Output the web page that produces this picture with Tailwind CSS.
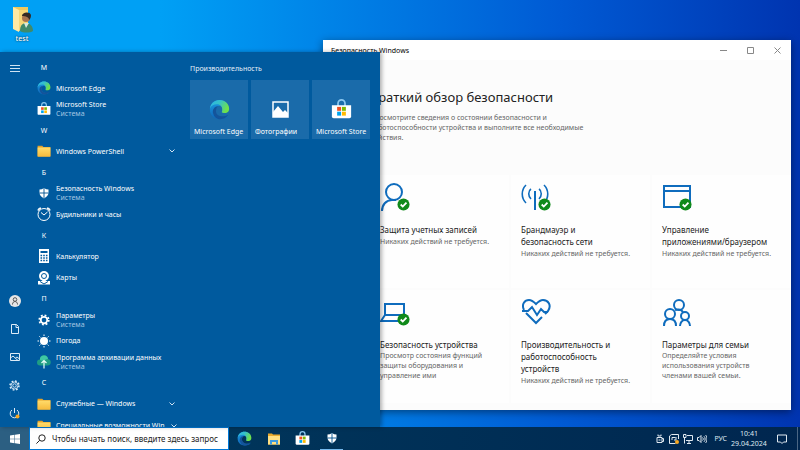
<!DOCTYPE html>
<html lang="ru">
<head>
  <meta charset="UTF-8" />
  <meta name="viewport" content="width=device-width, initial-scale=1.0" />
  <title>Безопасность Windows</title>
  <script src="https://cdn.jsdelivr.net/npm/@tailwindcss/browser@4"></script>
</head>
<body class="h-screen flex flex-col overflow-hidden font-['Noto_Sans','Open_Sans',sans-serif] text-[7px] leading-[9px] bg-linear-to-r from-[#00a0f5] from-20% via-[#005ad4] via-70% to-[#0034b0]">

  <!-- shared icons -->
  <svg class="absolute size-0">
    <defs>
      <linearGradient id="edge-blue" x1="0" y1="0" x2="0" y2="1">
        <stop offset="0" stop-color="#1b9de2" />
        <stop offset="1" stop-color="#0f66b8" />
      </linearGradient>
      <linearGradient id="edge-green" x1="0" y1="0" x2="1" y2="0.4">
        <stop offset="0" stop-color="#2bb5e8" />
        <stop offset="0.5" stop-color="#35c1c9" />
        <stop offset="1" stop-color="#6fe04b" />
      </linearGradient>
      <linearGradient id="folder-front" x1="0" y1="0" x2="0" y2="1">
        <stop offset="0" stop-color="#ffdc6b" />
        <stop offset="1" stop-color="#f6b93b" />
      </linearGradient>
    </defs>
    <symbol id="edge" viewBox="0 0 24 24">
      <path fill="url(#edge-blue)" d="M1 12C1 5 6 1 12 1c6 0 10 4 10 9 0 3-2 5-5 5-2 0-3-1-2-2 1-3-1-5-3-5-3 0-5 3-4 7 1 4 5 6 9 6 2 0 3-1 5-2-2 3-6 4-10 4C5 23 1 18 1 12z" />
      <path fill="#14549a" d="M8 14c0-3 1-5 3-6-5 0-8 5-6 9 1 4 5 6 8 6 4 0 7-2 9-5-7 4-14 1-14-4z" />
      <path fill="url(#edge-green)" d="M1 11C2 5 6 1 12 1c6 0 11 4 11 10 0 4-3 5-6 5-2 0-3-1-2-2 1-5-2-8-6-8-4 0-7 2-8 5z" />
    </symbol>
    <symbol id="store" viewBox="0 0 24 24">
      <path d="M8 8V5a4 4 0 0 1 8 0v3" fill="none" stroke="#8cc8f0" stroke-width="2" />
      <path d="M1 7h22v13a2 2 0 0 1-2 2H3a2 2 0 0 1-2-2z" fill="#fff" />
      <path d="M7 9h4.500v4.500H7z" fill="#f25022" />
      <path d="M12.500 9H17v4.500h-4.500z" fill="#7fba00" />
      <path d="M7 14.500h4.500V19H7z" fill="#00a4ef" />
      <path d="M12.500 14.500H17V19h-4.500z" fill="#ffb900" />
    </symbol>
    <symbol id="folder" viewBox="0 0 24 24">
      <path d="M1 3h8l2 2h12v16H1z" fill="#e3a02b" />
      <path d="M1 6h22v15a1 1 0 0 1-1 1H2a1 1 0 0 1-1-1z" fill="url(#folder-front)" />
    </symbol>
    <symbol id="shield" viewBox="0 0 24 24">
      <path d="M12 2c3 2 6 3 9 3v6c0 6-4 9-9 12-5-3-9-6-9-12V5c3 0 6-1 9-3z" fill="#fff" />
      <path d="M12 2v21M3 12h18" stroke="#00508f" stroke-width="1.800" />
    </symbol>
    <symbol id="check" viewBox="0 0 14 14">
      <circle cx="7" cy="7" r="6.500" fill="#108a1a" />
      <path d="M4 7l2.200 2.200L10.200 5" fill="none" stroke="#fff" stroke-width="2" />
    </symbol>
    <symbol id="chevron" viewBox="0 0 8 8">
      <path d="M1.500 2.500L4 5l2.500-2.500" fill="none" stroke="#cfe3f3" />
    </symbol>
    <symbol id="gear" viewBox="0 0 24 24">
      <circle cx="12" cy="12" r="6.500" fill="none" stroke="currentColor" stroke-width="3.500" />
      <circle cx="12" cy="12" r="9.500" fill="none" stroke="currentColor" stroke-width="3.500" stroke-dasharray="3.730 3.730" />
    </symbol>
  </svg>

  <main class="relative flex-1 min-h-0">
    <!-- desktop icon -->
    <a href="#" class="absolute left-1 top-[6px] w-9 flex flex-col items-center gap-[1px] text-white font-medium text-shadow-[0_0_2px_#000]">
      <svg class="w-[24px] h-[27px]" viewBox="0 0 24 27">
        <path d="M3 1h15v21H3z" fill="#eec85e" />
        <path d="M3 1l6 3v22l-6-3z" fill="#ffe9a3" />
        <path d="M9 4h9v18l-9 3z" fill="#f7d777" />
        <path d="M10 25c0-6 3-8 6-8 4 0 7 3 7 8-3 2-10 2-13 0z" fill="#3f8a6c" />
        <path d="M14 17l2 5 3-5z" fill="#d9e8de" />
        <circle cx="16" cy="12" r="4" fill="#a97550" />
        <path d="M12 10c0-4 8-5 9-1 0 3-1 4-2 5 0-3-3-4-7-4z" fill="#352a24" />
      </svg>
      <span>test</span>
    </a>

    <!-- Windows Security window -->
    <section class="absolute left-[323px] right-[9px] top-10 bottom-[17px] flex flex-col bg-[#fcfcfc] shadow-[0_2px_8px_rgba(0,0,0,0.45)] overflow-hidden">
      <header class="h-5 shrink-0 flex items-center justify-between bg-white pl-2 text-black">
        <span>Безопасность Windows</span>
        <div class="flex text-[#888]">
          <button class="w-[27px] h-5 flex items-center justify-center" aria-label="Свернуть">
            <svg class="size-[7px]" viewBox="0 0 7 7" fill="none" stroke="currentColor"><path d="M0 3.500h7" /></svg>
          </button>
          <button class="w-[27px] h-5 flex items-center justify-center" aria-label="Развернуть">
            <svg class="size-[7px]" viewBox="0 0 7 7" fill="none" stroke="currentColor"><path d="M.5.5h6v6h-6z" /></svg>
          </button>
          <button class="w-[27px] h-5 flex items-center justify-center" aria-label="Закрыть">
            <svg class="size-[7px]" viewBox="0 0 7 7" fill="none" stroke="currentColor"><path d="M.5.5l6 6M6.500.5l-6 6" /></svg>
          </button>
        </div>
      </header>

      <div class="pl-[47px] pt-7">
        <h1 class="text-[13px] leading-[18px] text-[#222]">Краткий обзор безопасности</h1>
        <p class="mt-[7px] w-[225px] text-[7px] leading-[10px] text-[#666]">Просмотрите сведения о состоянии безопасности и<br />работоспособности устройства и выполните все необходимые<br />действия.</p>

        <div class="mt-8 grid grid-cols-3 gap-[2px]">
          <article class="h-[113px] bg-[#fefefe] px-[10px] pt-2">
            <svg class="w-[30px] h-7" viewBox="0 0 30 28">
              <g fill="none" stroke="#0f6cbd" stroke-width="2">
                <circle cx="14" cy="9" r="8" />
                <path d="M2 28c0-6 4-11 10-11h4" />
              </g>
              <use href="#check" x="17" y="15" width="13" height="13" />
            </svg>
            <h2 class="mt-[13px] text-[8px] leading-[12px] text-[#222]">Защита учетных записей</h2>
            <p class="leading-[11px] text-[#666] whitespace-nowrap">Никаких действий не требуется.</p>
          </article>

          <article class="h-[113px] bg-[#fefefe] px-[10px] pt-2">
            <svg class="w-[30px] h-7" viewBox="0 0 30 28">
              <g fill="none" stroke="#0f6cbd" stroke-width="2">
                <path d="M14 8v19" />
                <path d="M10 6c-3 2-3 7 0 10M18 6c3 2 3 7 0 10" stroke-width="1.600" />
                <path d="M5 2c-5 5-5 13 0 18M23 2c5 5 5 13 0 18" stroke-width="1.600" />
              </g>
              <use href="#check" x="17" y="15" width="13" height="13" />
            </svg>
            <h2 class="mt-[13px] text-[8px] leading-[12px] text-[#222]">Брандмауэр и<br />безопасность сети</h2>
            <p class="leading-[11px] text-[#666] whitespace-nowrap">Никаких действий не требуется.</p>
          </article>

          <article class="h-[113px] bg-[#fefefe] px-[10px] pt-2">
            <svg class="w-[30px] h-7" viewBox="0 0 30 28">
              <path d="M2 3h26v21H2zM2 8h26" fill="none" stroke="#0f6cbd" stroke-width="2" />
              <use href="#check" x="17" y="15" width="13" height="13" />
            </svg>
            <h2 class="mt-[13px] text-[8px] leading-[12px] text-[#222] whitespace-nowrap">Управление<br />приложениями/браузером</h2>
            <p class="leading-[11px] text-[#666] whitespace-nowrap">Никаких действий не требуется.</p>
          </article>

          <article class="h-[113px] bg-[#fefefe] px-[10px] pt-2">
            <svg class="w-[30px] h-7" viewBox="0 0 30 28">
              <path d="M5 17V6h19v10M5 17h17M5 17l-4 6h17" fill="none" stroke="#0f6cbd" stroke-width="2" />
              <use href="#check" x="17" y="15" width="13" height="13" />
            </svg>
            <h2 class="mt-[13px] text-[8px] leading-[12px] text-[#222] whitespace-nowrap">Безопасность устройства</h2>
            <p class="leading-[10px] text-[#666]">Просмотр состояния функций<br />защиты оборудования и<br />управление ими</p>
          </article>

          <article class="h-[113px] bg-[#fefefe] px-[10px] pt-2">
            <svg class="w-[30px] h-7" viewBox="0 0 30 28" fill="none" stroke="#0f6cbd" stroke-width="2">
              <path d="M3 12C0 6 4 2 8 2c3 0 5 2 7 4 2-2 4-4 7-4 5 0 9 5 5 11l-3 3M5 15l10 10 6-6" />
              <path d="M1 13h6l4-4 5 8 4-6 3 3h4" />
            </svg>
            <h2 class="mt-[13px] text-[8px] leading-[12px] text-[#222]">Производительность и<br />работоспособность<br />устройств</h2>
            <p class="leading-[11px] text-[#666] whitespace-nowrap">Никаких действий не требуется.</p>
          </article>

          <article class="h-[113px] bg-[#fefefe] px-[10px] pt-2">
            <svg class="w-[30px] h-7" viewBox="0 0 30 28" fill="none" stroke="#0f6cbd" stroke-width="2">
              <circle cx="17" cy="7" r="5" />
              <circle cx="8" cy="16" r="5" />
              <circle cx="23" cy="18" r="4" />
              <path d="M2 28c0-4 2-7 6-7s6 3 6 7M18 28c0-3 2-6 5-6s5 3 5 6M13 12c3-1 6-1 8 2" />
            </svg>
            <h2 class="mt-[13px] text-[8px] leading-[12px] text-[#222]">Параметры для семьи</h2>
            <p class="leading-[10px] text-[#666]">Определяйте условия<br />использования устройств<br />членами вашей семьи.</p>
          </article>
        </div>
      </div>
    </section>

    <!-- start menu -->
    <nav class="absolute left-0 top-[52px] bottom-0 w-[380px] flex bg-[#005a9e] text-white shadow-[2px_0_4px_rgba(0,0,0,0.3)] overflow-hidden">
      <div class="w-[29px] shrink-0 flex flex-col items-center pt-[2px]">
        <button class="h-7 flex items-center" aria-label="Меню">
          <svg class="size-[10px]" viewBox="0 0 10 10" stroke="#cfe3f3"><path d="M0 2.500h10M0 5.500h10M0 8.500h10" /></svg>
        </button>
        <button class="mt-auto h-7 flex items-center" aria-label="Учетная запись">
          <svg class="size-3" viewBox="0 0 12 12">
            <circle cx="6" cy="6" r="6" fill="#e6e6e6" />
            <path d="M3.500 9.500c0-4 5-4 5 0" fill="none" stroke="#555" />
            <circle cx="6" cy="4.500" r="1.800" fill="#e6e6e6" stroke="#555" />
          </svg>
        </button>
        <button class="h-7 flex items-center" aria-label="Документы">
          <svg class="size-[10px]" viewBox="0 0 10 10" fill="none" stroke="#dcebf7"><path d="M1.500.5h5l2 2v7h-7zM6 .5v3h2.500" /></svg>
        </button>
        <button class="h-7 flex items-center" aria-label="Изображения">
          <svg class="size-[10px]" viewBox="0 0 10 10" fill="none" stroke="#dcebf7"><path d="M.5 1.500h9v7h-9zM.5 6l2.500-2 5 4.500M5.500 6L7 5l2.500 2" /></svg>
        </button>
        <button class="h-7 flex items-center" aria-label="Параметры">
          <svg class="size-[11px]" viewBox="0 0 22 22" fill="none" stroke="#dcebf7">
            <circle cx="11" cy="11" r="3.500" stroke-width="1.800" />
            <circle cx="11" cy="11" r="7" stroke-width="1.800" />
            <circle cx="11" cy="11" r="9" stroke-width="3" stroke-dasharray="3.530 3.530" />
          </svg>
        </button>
        <button class="h-7 flex items-center" aria-label="Выключение">
          <svg class="size-[11px]" viewBox="0 0 11 11" fill="none" stroke="#dcebf7">
            <path d="M3 2a4.300 4.300 0 1 0 5 0M5.500 0v5" />
            <circle cx="8.500" cy="8.500" r="2" fill="#f7a823" stroke="none" />
          </svg>
        </button>
      </div>

      <ul class="w-[161px] shrink-0 pl-2 pt-[6px]">
        <li><button class="w-[14px] h-[21px] pb-[2px] text-center block">M</button></li>
        <li>
          <a href="#" class="h-[21px] pb-[3px] flex items-center gap-[5px]">
            <svg class="size-[14px]"><use href="#edge" /></svg>
            <span>Microsoft Edge</span>
          </a>
        </li>
        <li>
          <a href="#" class="h-[21px] pb-[3px] flex items-center gap-[5px]">
            <svg class="size-[14px]"><use href="#store" /></svg>
            <span>Microsoft Store<br /><span class="text-[#a3c6e2]">Система</span></span>
          </a>
        </li>
        <li><button class="w-[14px] h-[21px] pb-[2px] text-center block">W</button></li>
        <li>
          <button class="w-full h-[21px] pb-[3px] pr-[14px] flex items-center gap-[5px]">
            <svg class="size-[14px]"><use href="#folder" /></svg>
            <span>Windows PowerShell</span>
            <svg class="size-2 ml-auto"><use href="#chevron" /></svg>
          </button>
        </li>
        <li><button class="w-[14px] h-[21px] pb-[2px] text-center block">Б</button></li>
        <li>
          <a href="#" class="h-[21px] pb-[3px] flex items-center gap-[5px]">
            <svg class="w-[14px] h-3"><use href="#shield" /></svg>
            <span>Безопасность Windows<br /><span class="text-[#a3c6e2]">Система</span></span>
          </a>
        </li>
        <li>
          <a href="#" class="h-[21px] pb-[3px] flex items-center gap-[5px]">
            <svg class="size-[14px]" viewBox="0 0 14 14" fill="none" stroke="#fff">
              <circle cx="7" cy="7.500" r="6" />
              <path d="M4 5.500l3 2.500 3.500-3" />
              <path d="M1 3.500C1 1.500 2 1 4 1zM13 3.500C13 1.500 12 1 10 1z" fill="#fff" />
            </svg>
            <span>Будильники и часы</span>
          </a>
        </li>
        <li><button class="w-[14px] h-[21px] pb-[2px] text-center block">К</button></li>
        <li>
          <a href="#" class="h-[21px] pb-[3px] flex items-center gap-[5px]">
            <svg class="size-[14px]" viewBox="0 0 14 14">
              <path d="M2 0h10v14H2z" fill="#fff" />
              <path d="M3.500 2h7v2h-7z" fill="#005a9e" />
              <path d="M3.500 6.500h7M3.500 9h7M3.500 11.500h7" stroke="#005a9e" stroke-width="1.400" stroke-dasharray="1.600 1.100" />
            </svg>
            <span>Калькулятор</span>
          </a>
        </li>
        <li>
          <a href="#" class="h-[21px] pb-[2px] flex items-center gap-[5px]">
            <svg class="size-[14px]" viewBox="0 0 14 14">
              <path d="M1 10h12v3.500H1z" fill="#fff" />
              <path d="M3 10.500l4 2.500 4-2.500" fill="none" stroke="#005a9e" />
              <circle cx="7" cy="5" r="5" fill="#fff" />
              <circle cx="7" cy="5" r="2.500" fill="none" stroke="#005a9e" />
              <path d="M5 9h4l-2 3z" fill="#fff" />
            </svg>
            <span>Карты</span>
          </a>
        </li>
        <li><button class="w-[14px] h-[21px] pb-[2px] text-center block">П</button></li>
        <li>
          <a href="#" class="h-[21px] pb-[2px] flex items-center gap-[5px]">
            <svg class="w-[14px] h-3"><use href="#gear" /></svg>
            <span>Параметры<br /><span class="text-[#a3c6e2]">Система</span></span>
          </a>
        </li>
        <li>
          <a href="#" class="h-[21px] pb-[2px] flex items-center gap-[5px]">
            <svg class="size-[14px]" viewBox="0 0 14 14">
              <circle cx="7" cy="7" r="4" fill="#fff" />
              <path d="M7 .5v1.500M7 12v1.500M.5 7H2M12 7h1.500M2.400 2.400l1 1M10.600 10.600l1 1M2.400 11.600l1-1M10.600 3.400l1-1" stroke="#fff" />
            </svg>
            <span>Погода</span>
          </a>
        </li>
        <li>
          <a href="#" class="h-[21px] pb-[2px] flex items-center gap-[5px]">
            <svg class="size-[14px]" viewBox="0 0 14 14">
              <path d="M3 10.500a3 3 0 0 1 0-6 4 4 0 0 1 8-.5 3.300 3.300 0 0 1 0 6.500z" fill="#1f9d84" />
              <path d="M3 5a4 4 0 0 1 8-1c-3 0-3 3-8 1z" fill="#3fc8a4" />
              <path d="M7 13.500V6M4.500 8L7 5.500 9.500 8" fill="none" stroke="#e8fff8" stroke-width="1.200" />
            </svg>
            <span class="whitespace-nowrap">Программа архивации данных<br /><span class="text-[#a3c6e2]">Система</span></span>
          </a>
        </li>
        <li><button class="w-[14px] h-[21px] pb-[2px] text-center block">С</button></li>
        <li>
          <button class="w-full h-[21px] pb-[2px] pr-[14px] flex items-center gap-[5px]">
            <svg class="size-[14px]"><use href="#folder" /></svg>
            <span>Служебные — Windows</span>
            <svg class="size-2 ml-auto"><use href="#chevron" /></svg>
          </button>
        </li>
        <li>
          <button class="w-full h-[21px] pr-[14px] flex items-center gap-[5px]">
            <svg class="size-[14px] shrink-0"><use href="#folder" /></svg>
            <span class="whitespace-nowrap">Специальные возможности Win</span>
            <svg class="size-2 ml-auto shrink-0"><use href="#chevron" /></svg>
          </button>
        </li>
      </ul>

      <div class="flex-1 pt-3 pr-[10px]">
        <h2 class="text-[#e3eef7]">Производительность</h2>
        <div class="mt-[7px] grid grid-cols-3 gap-[3px]">
          <a href="#" class="h-[59px] bg-[#1a6baa] flex flex-col items-center pt-[19px]">
            <svg class="size-[21px]"><use href="#edge" /></svg>
            <span class="mt-auto mb-[3px] w-full pl-1 whitespace-nowrap">Microsoft Edge</span>
          </a>
          <a href="#" class="h-[59px] bg-[#1a6baa] flex flex-col items-center pt-[19px]">
            <svg class="size-[21px]" viewBox="0 0 21 21">
              <path d="M3 3h15v15H3z" fill="none" stroke="#fff" stroke-width="1.500" />
              <path d="M3 18v-5l5-6 5 6 2-2 3 3v4z" fill="#fff" />
            </svg>
            <span class="mt-auto mb-[3px] w-full pl-1 whitespace-nowrap">Фотографии</span>
          </a>
          <a href="#" class="h-[59px] bg-[#1a6baa] flex flex-col items-center pt-[19px]">
            <svg class="size-[21px]"><use href="#store" /></svg>
            <span class="mt-auto mb-[3px] w-full pl-1 whitespace-nowrap">Microsoft Store</span>
          </a>
        </div>
      </div>
    </nav>
  </main>

  <!-- taskbar -->
  <footer class="h-[23px] shrink-0 flex items-stretch bg-linear-to-r from-[#003b5f] to-[#00264f] text-white">
    <button class="w-[29px] flex items-center justify-center bg-[#2c5f82]" aria-label="Пуск">
      <svg class="size-[10px]" viewBox="0 0 10 10" fill="#fff"><path d="M0 1.500L4.500.8v4H0zM5 .7L10 0v4.800H5zM0 5.300h4.500v4L0 8.600zM5 5.300h5V10l-5-.7z" /></svg>
    </button>
    <label class="w-[200px] flex items-center gap-[6px] bg-white border border-[#0078d7] px-[6px]">
      <svg class="size-[10px] shrink-0" viewBox="0 0 10 10" fill="none" stroke="#222"><circle cx="6" cy="4" r="3.200" /><path d="M3.700 6.300L.4 9.600" /></svg>
      <input type="text" aria-label="Поиск" placeholder="Чтобы начать поиск, введите здесь запрос" class="flex-1 min-w-0 text-[8px] leading-[12px] text-black placeholder:text-[#222] outline-none" />
    </label>
    <div class="flex pl-[1px]">
      <button class="w-[29px] flex items-center justify-center" aria-label="Microsoft Edge"><svg class="size-[15px]"><use href="#edge" /></svg></button>
      <button class="w-[29px] flex items-center justify-center" aria-label="Проводник">
        <svg class="size-[14px]" viewBox="0 0 14 14">
          <path d="M1 1.500h4l1 1h7v10H1z" fill="#e8a92e" />
          <path d="M1 4h12v8.500H1z" fill="#ffe083" />
          <path d="M3 12.500V8h8v4.500H9V10H5v2.500z" fill="#3d9be0" />
        </svg>
      </button>
      <button class="w-[29px] flex items-center justify-center" aria-label="Microsoft Store"><svg class="size-[15px]"><use href="#store" /></svg></button>
      <button class="w-[29px] flex items-center justify-center px-[3px]" aria-label="Безопасность Windows">
        <span class="w-full h-full flex items-center justify-center border-b border-[#76b9ed]"><svg class="size-3"><use href="#shield" /></svg></span>
      </button>
    </div>

    <div class="ml-auto flex items-center gap-1 text-[#dfe8f0]">
      <svg class="size-[10px]" viewBox="0 0 10 10" fill="none" stroke="currentColor"><path d="M2 3.500h5v5H2zM7 4.500h1.500v3H7M3 .5v1.500h3V.5M3.500 6h2" /></svg>
      <svg class="size-[10px]" viewBox="0 0 10 10" fill="none" stroke="currentColor"><path d="M9.500 5V.5h-7M.5 2v7.500h6M2.500.5L.5 2M3 6V3.500h3.500M5 6h2V3" /><circle cx="8" cy="8" r="2" fill="#f7a823" stroke="none" /></svg>
      <svg class="size-[10px]" viewBox="0 0 10 10" fill="none" stroke="currentColor"><path d="M4 1.500h5.500v5H3M6 6.500v3M4 9.500h4M.5.500h2.500v3H.5zM1.500 3.500v6" /></svg>
      <svg class="size-[10px]" viewBox="0 0 10 10" fill="none" stroke="currentColor"><path d="M.5 3.500H2l2-2v7l-2-2H.5zM5.500 3.500c1 1 1 2 0 3M7 2.300c1.500 1.500 1.500 4 0 5.500M8.500 1c2 2 2 6 0 8" /></svg>
      <button class="ml-[3px] leading-[10px]">РУС</button>
      <time class="w-9 text-center leading-[10px]" datetime="2024-04-29T10:41">10:41<br />29.04.2024</time>
      <button class="w-[22px] flex justify-center" aria-label="Уведомления">
        <svg class="size-[10px]" viewBox="0 0 10 10" fill="none" stroke="currentColor"><path d="M.5 1h9v7H6.500L5 9.500 3.500 8h-3z" /></svg>
      </button>
      <span class="self-stretch w-[3px] border-l border-[#4a6684]"></span>
    </div>
  </footer>
</body>
</html>
